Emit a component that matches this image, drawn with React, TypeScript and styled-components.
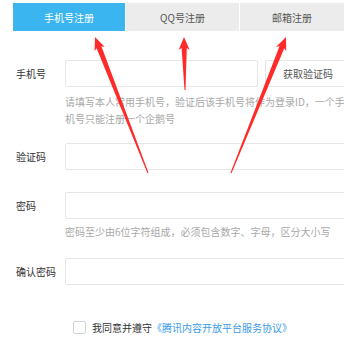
import styled, { createGlobalStyle } from 'styled-components'

const GlobalStyle = createGlobalStyle`
    html, body {
        margin: 0;
        padding: 0;
        background: #ffffff;
        overflow: hidden;
    }
    body {
        font-family: "Noto Sans CJK SC", "Noto Sans", sans-serif;
        font-size: 10px;
        color: #333333;
    }
`;

const Page = styled.div`
    position: relative;
    width: 344px;
    height: 339px;
    overflow: hidden;
`;

const Tabs = styled.div`
    display: flex;
    gap: 1px;
    margin: 3px 0 0 13px;
    height: 28px;
`;

const Tab = styled.div<{ $active?: boolean; $width?: number }>`
    flex: ${p => (p.$width ? `0 0 ${p.$width}px` : '1 0 auto')};
    display: flex;
    align-items: center;
    justify-content: center;
    background: ${p => (p.$active ? '#3ab5f0' : '#ececec')};
    color: ${p => (p.$active ? '#ffffff' : '#555555')};
    font-size: 10px;
`;

const Form = styled.div`
    padding-left: 16px;
`;

const Field = styled.div<{ $top: number }>`
    display: grid;
    grid-template-columns: 49px 1fr;
    margin-top: ${p => p.$top}px;
`;

const Label = styled.div`
    height: 27px;
    line-height: 27px;
    color: #333333;
    white-space: nowrap;
`;

const Controls = styled.div`
    display: flex;
    gap: 7px;
`;

const Input = styled.div<{ $width?: number }>`
    box-sizing: border-box;
    height: 27px;
    width: ${p => (p.$width ? `${p.$width}px` : '300px')};
    flex: 0 0 auto;
    border: 1px solid #e6e6e6;
    border-radius: 2px;
    background: #ffffff;
`;

const CodeButton = styled.div`
    box-sizing: border-box;
    height: 27px;
    width: 100px;
    flex: 0 0 auto;
    padding-left: 17px;
    line-height: 25px;
    border: 1px solid #e6e6e6;
    border-radius: 2px;
    color: #555555;
`;

const Hint = styled.div<{ $top: number }>`
    grid-column: 2;
    margin-top: ${p => p.$top}px;
    line-height: 17px;
    color: #a8a8a8;
    width: 282px;
`;

const Agree = styled.div`
    display: flex;
    align-items: center;
    margin: 36px 0 0 73px;
    white-space: nowrap;
    line-height: 13px;
`;

const Box = styled.span`
    box-sizing: border-box;
    width: 13px;
    height: 13px;
    border: 1px solid #cfd4dc;
    border-radius: 2px;
    margin-right: 6px;
`;

const Link = styled.span`
    color: #3a9be8;
`;

const Overlay = styled.svg`
    position: absolute;
    left: 0;
    top: 0;
    pointer-events: none;
`;

type Pt = [number, number];

const arrowPoints = (tip: Pt, tail: Pt) => {
    const dx = tail[0] - tip[0];
    const dy = tail[1] - tip[1];
    const len = Math.hypot(dx, dy);
    const ux = dx / len;
    const uy = dy / len;
    const nx = -uy;
    const ny = ux;
    const head = 13;
    const hw = 5.5;
    const sw = 2.6;
    const tw = 0.5;
    const at = (d: number, w: number): string =>
        `${(tip[0] + ux * d + nx * w).toFixed(1)},${(tip[1] + uy * d + ny * w).toFixed(1)}`;
    return [
        at(0, 0),
        at(head, hw),
        at(head - 2, sw),
        at(len, tw),
        at(len, -tw),
        at(head - 2, -sw),
        at(head, -hw),
    ].join(' ');
};

const arrows: [Pt, Pt][] = [
    [[95, 37], [148, 173]],
    [[184, 37], [185, 90]],
    [[286, 37], [231, 173]],
];

const App = () => {
    return (
        <Page>
            <GlobalStyle />
            <Tabs>
                <Tab $active $width={112}>手机号注册</Tab>
                <Tab $width={113}>QQ号注册</Tab>
                <Tab>邮箱注册</Tab>
            </Tabs>

            <Form>
                <Field $top={29}>
                    <Label>手机号</Label>
                    <Controls>
                        <Input $width={193} />
                        <CodeButton>获取验证码</CodeButton>
                    </Controls>
                    <Hint $top={6}>
                        请填写本人常用手机号，验证后该手机号将作为登录ID，一个手机号只能注册一个企鹅号
                    </Hint>
                </Field>

                <Field $top={16}>
                    <Label>验证码</Label>
                    <Input />
                </Field>

                <Field $top={22}>
                    <Label>密码</Label>
                    <Input />
                    <Hint $top={4}>密码至少由6位字符组成，必须包含数字、字母，区分大小写</Hint>
                </Field>

                <Field $top={18}>
                    <Label>确认密码</Label>
                    <Input />
                </Field>
            </Form>

            <Agree>
                <Box />
                我同意并遵守<Link>《腾讯内容开放平台服务协议》</Link>
            </Agree>

            <Overlay width={344} height={339} viewBox="0 0 344 339">
                {arrows.map(([tip, tail], i) => (
                    <polygon key={i} points={arrowPoints(tip, tail)} fill="#ff2a2a" />
                ))}
            </Overlay>
        </Page>
    );
}

export default App;
